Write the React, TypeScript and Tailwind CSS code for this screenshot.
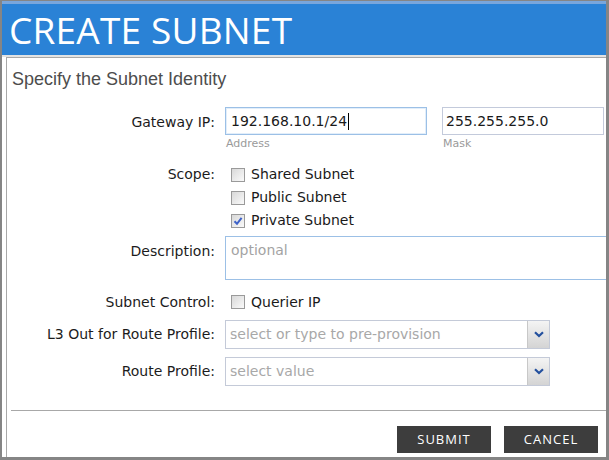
import React from "react";

const labelFont = { fontFamily: '"DejaVu Sans", Verdana, sans-serif' };

export default function App() {
  return (
    <div className="flex h-[460px] w-[609px] flex-col overflow-hidden border-x-2 border-b-[3px] border-t border-[#858585] border-r-[3px] bg-white">
      <Header />
      <div className="h-[2px] bg-[#e3e3e3]" />
      <div className="ml-[4px] flex flex-1 flex-col border-l border-[#a8a8a8]">
        <SubnetForm />
        <div className="ml-[4px] h-px bg-[#a8a8a8]" />
        <Footer />
      </div>
    </div>
  );
}

function Header() {
  return (
    <div className="h-[54px] border-t-[3px] border-[#79a6dc] bg-[#2a82d6] pt-[3px] pl-[7px]">
      <h1
        className="text-[37px] leading-[46px] font-normal tracking-[0.2px] text-white"
        style={{ fontFamily: '"Open Sans", "Noto Sans", sans-serif' }}
      >
        CREATE SUBNET
      </h1>
    </div>
  );
}

function SubnetForm() {
  return (
    <div className="flex h-[353px] flex-col border-t border-[#a8a8a8]" style={labelFont}>
      <h2
        className="mt-[10px] pl-[5px] text-[18px] leading-[22px] text-[#4d4d4d]"
        style={{ fontFamily: '"Liberation Sans", Arial, sans-serif' }}
      >
        Specify the Subnet Identity
      </h2>

      <Row label="Gateway IP:" top className="mt-[17px]">
        <div className="flex gap-[15px]">
          <div>
            <div className="flex h-[28px] w-[202px] items-center border border-[#9cc0e6] pl-[5px] text-[14px] text-[#1a1a1a] shadow-[inset_0_0_0_1px_#e2eefa]">
              192.168.10.1/24
              <span className="ml-px h-[17px] w-px bg-black" />
            </div>
            <Hint>Address</Hint>
          </div>
          <div>
            <div className="flex h-[28px] w-[162px] items-center border border-[#c3cadb] pl-[3px] text-[14px] text-[#1a1a1a]">
              255.255.255.0
            </div>
            <Hint>Mask</Hint>
          </div>
        </div>
      </Row>

      <div className="mt-[13px] flex flex-col">
        <Row label="Scope:" className="h-[23px]">
          <Check label="Shared Subnet" />
        </Row>
        <Row label="" className="h-[23px]">
          <Check label="Public Subnet" />
        </Row>
        <Row label="" className="h-[23px]">
          <Check label="Private Subnet" checked />
        </Row>
      </div>

      <Row label="Description:" top className="mt-[4px]">
        <div className="h-[44px] w-[400px] border border-[#9cc0e6] px-[5px] pt-[3px] text-[14px] text-[#a3a3a3]">
          optional
        </div>
      </Row>

      <Row label="Subnet Control:" className="mt-[11px] h-[22px]">
        <Check label="Querier IP" />
      </Row>

      <Row label="L3 Out for Route Profile:" className="mt-[7px]">
        <Combo placeholder="select or type to pre-provision" />
      </Row>

      <Row label="Route Profile:" className="mt-[8px]">
        <Combo placeholder="select value" />
      </Row>
    </div>
  );
}

function Row({
  label,
  top,
  className,
  children,
}: {
  label: string;
  top?: boolean;
  className?: string;
  children: React.ReactNode;
}) {
  return (
    <div className={`flex ${top ? "items-start" : "items-center"} ${className ?? ""}`}>
      <span className={`w-[209px] shrink-0 pr-px text-right text-[14px] text-[#1c1c1c] ${top ? "pt-[5px]" : ""}`}>
        {label}
      </span>
      <div className="ml-[9px]">{children}</div>
    </div>
  );
}

function Hint({ children }: { children: React.ReactNode }) {
  return <p className="mt-[2px] pl-px text-[11px] leading-[13px] text-[#9a9a9a]">{children}</p>;
}

function Check({ label, checked }: { label: string; checked?: boolean }) {
  return (
    <label className="flex items-center gap-[6px] pl-[6px] text-[14px] text-[#1a1a1a]">
      <span className="flex h-[14px] w-[14px] items-center justify-center border border-[#9a9a9a] bg-gradient-to-br from-[#d8d8d8] to-[#fafafa]">
        {checked && (
          <svg width="10" height="10" viewBox="0 0 10 10">
            <path d="M1.5 5.2 L4 7.8 L8.6 1.8" fill="none" stroke="#3e62c8" strokeWidth="2" />
          </svg>
        )}
      </span>
      {label}
    </label>
  );
}

function Combo({ placeholder }: { placeholder: string }) {
  return (
    <div className="flex h-[29px] w-[325px] border border-[#c4cad8]">
      <div className="flex flex-1 items-center pl-[4px] text-[14px] text-[#a8a8a8]">{placeholder}</div>
      <div className="flex w-[22px] items-center justify-center border-l border-[#c8c8c8] bg-gradient-to-b from-[#f4f4f4] to-[#d4d4d4]">
        <svg width="10" height="7" viewBox="0 0 10 7">
          <path d="M1 1.2 L5 5 L9 1.2" fill="none" stroke="#23509e" strokeWidth="2.2" />
        </svg>
      </div>
    </div>
  );
}

function Footer() {
  const btn =
    "flex h-[27px] w-[94px] items-center justify-center bg-[#3d3d3d] text-[13px] tracking-[1px] text-white";
  return (
    <div className="flex flex-1 items-start justify-end gap-[13px] pt-[15px] pr-[8px]" style={{ fontFamily: '"Open Sans", sans-serif' }}>
      <button className={btn}>SUBMIT</button>
      <button className={btn}>CANCEL</button>
    </div>
  );
}
